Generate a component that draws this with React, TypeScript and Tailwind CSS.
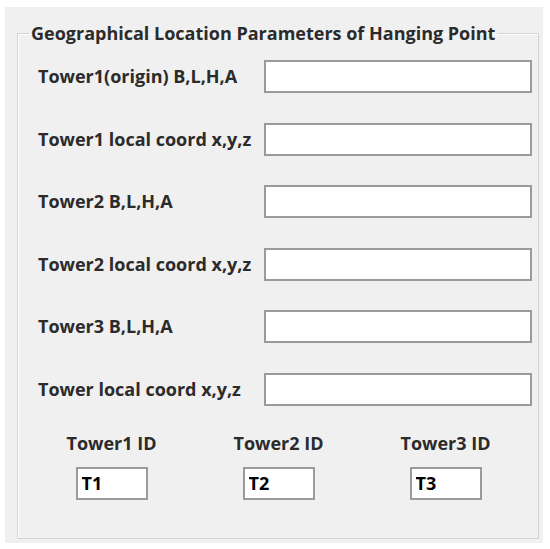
import React from 'react';

const rows = [
  'Tower1(origin) B,L,H,A',
  'Tower1 local coord x,y,z',
  'Tower2 B,L,H,A',
  'Tower2 local coord x,y,z',
  'Tower3 B,L,H,A',
  'Tower local coord x,y,z',
];

const ids = [
  { label: 'Tower1 ID', value: 'T1' },
  { label: 'Tower2 ID', value: 'T2' },
  { label: 'Tower3 ID', value: 'T3' },
];

export default function App() {
  return (
    <div className="w-[550px] h-[549px] bg-white pt-[7px] pl-[5px] font-['Open_Sans',sans-serif] text-[#2b2b2b]">
      <div className="w-[538px] h-[536px] bg-[#f0f0f0] pt-[14px] pl-[12px]">
        {/* group box */}
        <fieldset className="w-[522px] h-[518px] border border-[#d4d4d4] shadow-[inset_1px_1px_0_#ffffff]">
          <legend className="ml-[11px] px-[2px] text-[18px] font-bold leading-[24px]">
            Geographical Location Parameters of Hanging Point
          </legend>

          <div className="flex flex-col gap-[29.6px] pt-[15px]">
            {rows.map((r) => (
              <div key={r} className="flex items-center h-[33px] pl-[20px]">
                <span className="w-[226px] text-[18px] font-bold whitespace-nowrap">{r}</span>
                <input
                  type="text"
                  className="w-[268px] h-[33px] bg-white border-2 border-[#9a9a9a] outline-none"
                />
              </div>
            ))}
          </div>

          <div className="grid grid-cols-3 w-[501px] ml-[10px] mt-[26px]">
            {ids.map((t) => (
              <div key={t.label} className="flex flex-col items-center">
                <span className="text-[18px] font-bold leading-[22px]">{t.label}</span>
                <input
                  type="text"
                  defaultValue={t.value}
                  className="mt-[13px] w-[72px] h-[33px] bg-white border-2 border-[#9a9a9a] outline-none px-[4px] text-[18px] font-bold text-black"
                />
              </div>
            ))}
          </div>
        </fieldset>
      </div>
    </div>
  );
}
